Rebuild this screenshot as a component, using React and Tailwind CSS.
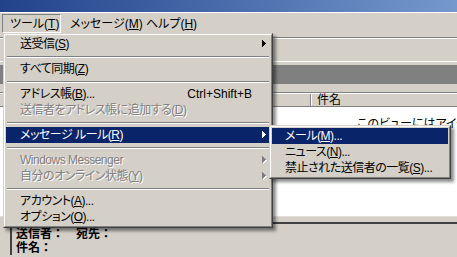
import React from "react";
import clsx from "clsx";

const Arrow = ({ disabled, white }) => (
  <svg width="5" height="8" viewBox="0 0 5 8" shapeRendering="crispEdges" className="shrink-0">
    {disabled && <path d="M1 1L5 4.5L1 8Z" fill="#fff" />}
    <path d="M0 0L4 3.5L0 7Z" fill={disabled ? "#808080" : white ? "#fff" : "#000"} />
  </svg>
);

const U = ({ children }) => <span className="underline underline-offset-[1px]">{children}</span>;

const Item = ({ label, shortcut, arrow, disabled, active, pl = "pl-[14px]" }) => (
  <div
    className={clsx(
      "flex h-4 items-center pr-[3px] whitespace-nowrap",
      pl,
      active && "bg-[#0a246a] text-white",
      disabled && "text-[#808080] [text-shadow:1px_1px_0_#fff]",
      !active && !disabled && "text-black"
    )}
  >
    <span className="flex-1 tracking-[-0.5px]">{label}</span>
    {shortcut && <span className="mr-[15px]">{shortcut}</span>}
    {arrow && <Arrow disabled={disabled} white={active} />}
  </div>
);

const Sep = () => (
  <div className="h-[9px] pt-[4px] px-px">
    <div className="h-px bg-[#808080]" />
    <div className="h-px bg-white" />
  </div>
);

const Popup = ({ className, children }) => (
  <div
    className={clsx(
      "absolute border border-t-[#d4d0c8] border-l-[#d4d0c8] border-r-[#404040] border-b-[#404040] bg-[#d4d0c8] shadow-[3px_3px_3px_rgba(0,0,0,0.45)]",
      className
    )}
  >
    <div className="border border-t-white border-l-white border-r-[#808080] border-b-[#808080] p-px">
      {children}
    </div>
  </div>
);

export default function App() {
  return (
    <div className="relative w-[457px] h-[257px] overflow-hidden bg-[#d4d0c8] text-[12px] leading-4 [font-feature-settings:'palt'] font-['Liberation_Sans','Noto_Sans_CJK_JP',sans-serif]">
      {/* title bar */}
      <div className="h-[12px] bg-gradient-to-r from-[#22428a] to-[#7599cd]" />
      <div className="h-px bg-white" />

      {/* menu bar */}
      <div className="flex h-[22px] items-start pt-px pl-[2px] whitespace-nowrap">
        <div className="flex h-[19px] w-[59px] items-center border border-t-[#808080] border-l-[#808080] border-r-white border-b-white pl-[7px]">
          <span>ツール(<U>T</U>)</span>
        </div>
        <div className="flex h-[19px] w-[85px] items-center pl-[9px]">
          <span>メッセージ(<U>M</U>)</span>
        </div>
        <div className="flex h-[19px] items-center">
          <span>ヘルプ(<U>H</U>)</span>
        </div>
      </div>

      {/* toolbar */}
      <div className="h-[2px]" />
      <div className="h-px bg-[#808080]" />
      <div className="h-px bg-white" />
      <div className="h-[22px]" />
      <div className="h-px bg-white" />
      <div className="h-[3px]" />

      {/* folder bar */}
      <div className="h-[19px] bg-[#808080]" />
      <div className="h-[8px]" />

      {/* message list */}
      <div className="border-t border-[#808080]">
        <div className="flex h-[14px] border-t border-white border-b border-b-[#808080]">
          <div className="w-[311px] border-r border-[#808080]" />
          <div className="border-l border-white pl-[5px] leading-[12px]">件名</div>
        </div>
        <div className="h-[109px] overflow-hidden bg-white pt-[9px] pl-[357px] whitespace-nowrap">
          このビューにはアイテムがありません。
        </div>
        <div className="h-px bg-[#e4e0d8]" />
        <div className="h-[5px]" />
      </div>

      {/* preview pane */}
      <div className="ml-[10px] border-t-2 border-l-2 border-t-[#404040] border-l-[#404040] pt-[3px] pl-[4px] font-bold leading-[14px] [font-feature-settings:normal]">
        <div>送信者：　宛先：</div>
        <div>件名：</div>
      </div>

      {/* tools dropdown */}
      <Popup className="left-[3px] top-[33px] w-[270px]">
        <Item label={<>送受信(<U>S</U>)</>} arrow />
        <Sep />
        <Item label={<>すべて同期(<U>Z</U>)</>} />
        <Sep />
        <Item label={<>アドレス帳(<U>B</U>)...</>} shortcut="Ctrl+Shift+B" />
        <Item label={<>送信者をアドレス帳に追加する(<U>D</U>)</>} disabled />
        <Sep />
        <Item label={<>メッセージ ルール(<U>R</U>)</>} arrow active />
        <Sep />
        <Item label="Windows Messenger" arrow disabled />
        <Item label={<>自分のオンライン状態(<U>Y</U>)</>} arrow disabled />
        <Sep />
        <Item label={<>アカウント(<U>A</U>)...</>} />
        <Item label={<>オプション(<U>O</U>)...</>} />
      </Popup>

      {/* rules submenu */}
      <Popup className="left-[269px] top-[125px] w-[182px]">
        <Item pl="pl-[13px]" label={<>メール(<U>M</U>)...</>} active />
        <Item pl="pl-[13px]" label={<>ニュース(<U>N</U>)...</>} />
        <Item pl="pl-[13px]" label={<>禁止された送信者の一覧(<U>S</U>)...</>} />
      </Popup>
    </div>
  );
}
